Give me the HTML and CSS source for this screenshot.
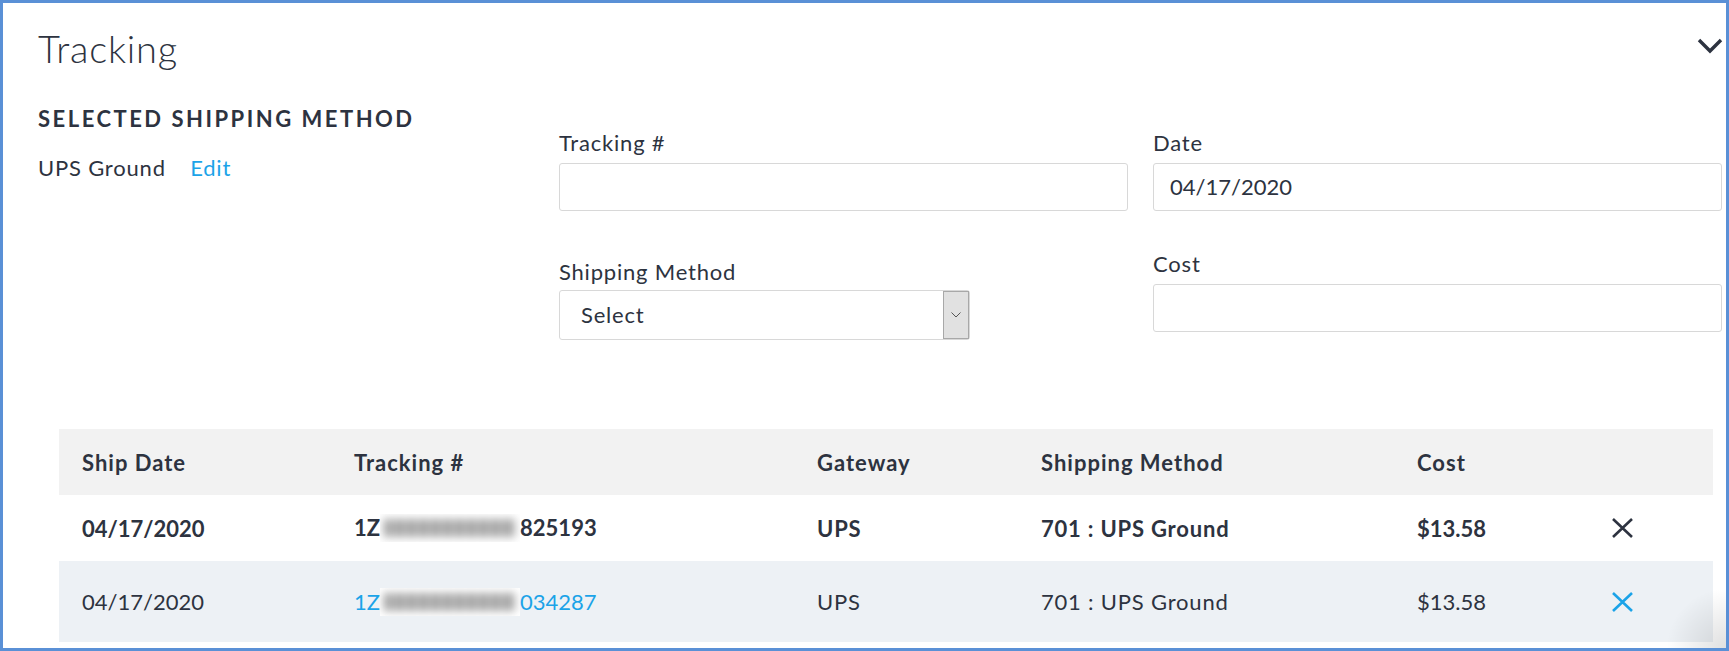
FILE: index.html
```html
<!DOCTYPE html>
<html>
<head>
<meta charset="utf-8">
<link rel="stylesheet" href="styles.css">
</head>
<body>
<div class="panel">
  <div class="panel-head">
    <h1 class="title">Tracking</h1>
    <svg class="chevron" width="26" height="16" viewBox="0 0 26 16"><path d="M2 2 L13 13 L24 2" fill="none" stroke="#2d3340" stroke-width="3.4"/></svg>
  </div>
  <div class="top">
    <div class="selected">
      <h2 class="sel-title">SELECTED SHIPPING METHOD</h2>
      <div class="sel-value">UPS Ground <a class="link edit">Edit</a></div>
    </div>
    <div class="form">
      <div class="field">
        <label class="label">Tracking #</label>
        <div class="input"></div>
      </div>
      <div class="field">
        <label class="label">Date</label>
        <div class="input num">04/17/2020</div>
      </div>
      <div class="field field-select">
        <label class="label">Shipping Method</label>
        <div class="select">
          <span class="select-text">Select</span>
          <span class="select-btn"><svg width="10" height="6" viewBox="0 0 10 6"><path d="M0.5 0.5 L5 5 L9.5 0.5" fill="none" stroke="#555" stroke-width="1"/></svg></span>
        </div>
      </div>
      <div class="field field-cost">
        <label class="label">Cost</label>
        <div class="input"></div>
      </div>
    </div>
  </div>
  <table class="grid">
    <colgroup>
      <col class="c1"><col class="c2"><col class="c3"><col class="c4"><col class="c5"><col class="c6">
    </colgroup>
    <thead>
      <tr class="head-row">
        <th>Ship Date</th><th>Tracking #</th><th>Gateway</th><th>Shipping Method</th><th>Cost</th><th></th>
      </tr>
    </thead>
    <tbody>
      <tr class="row row-bold">
        <td class="num">04/17/2020</td>
        <td class="num">1Z<span class="blur"><span class="blur-in"></span></span>825193</td>
        <td>UPS</td>
        <td>701 : UPS Ground</td>
        <td class="num">$13.58</td>
        <td><svg class="x" width="21" height="20" viewBox="0 0 21 20"><path d="M1 1 L20 19 M20 1 L1 19" stroke="#2d3340" stroke-width="2.6" fill="none"/></svg></td>
      </tr>
      <tr class="row row-alt">
        <td class="num">04/17/2020</td>
        <td class="num"><a class="link">1Z<span class="blur"><span class="blur-in"></span></span>034287</a></td>
        <td>UPS</td>
        <td>701 : UPS Ground</td>
        <td class="num">$13.58</td>
        <td><svg class="x" width="21" height="20" viewBox="0 0 21 20"><path d="M1 1 L20 19 M20 1 L1 19" stroke="#1ba3e8" stroke-width="2.6" fill="none"/></svg></td>
      </tr>
    </tbody>
  </table>
  <div class="corner"></div>
</div>
</body>
</html>
```

FILE: styles.css
```css
* { box-sizing: border-box; }
html, body { margin: 0; padding: 0; background: #fff; }
body {
  font-family: Lato, "Liberation Sans", sans-serif;
  color: #2d3340;
  font-size: 22px;
  letter-spacing: 0.8px;
}
.num { letter-spacing: 0; }
.panel {
  position: relative;
  width: 1729px;
  height: 651px;
  border: 3px solid #5a90d6;
  padding: 22px 4px 0 35px;
  overflow: hidden;
}
.panel-head {
  display: flex;
  justify-content: space-between;
  align-items: flex-start;
  height: 46px;
}
.title {
  margin: 0;
  font-size: 38px;
  line-height: 46px;
  font-weight: 300;
  letter-spacing: 0.8px;
}
.chevron { margin-top: 13px; margin-right: -1px; }
.top {
  display: flex;
  align-items: flex-start;
  margin-top: 35px;
}
.selected { width: 521px; flex: none; }
.sel-title {
  margin: 0;
  font-size: 22px;
  line-height: 25px;
  font-weight: 700;
  letter-spacing: 2.5px;
}
.sel-value {
  margin-top: 24px;
  font-size: 22px;
  line-height: 26px;
}
.link { color: #1ba3e8; text-decoration: none; }
.edit { margin-left: 18px; }
.form {
  flex: 1;
  display: grid;
  grid-template-columns: 1fr 1fr;
  column-gap: 25px;
  padding-top: 24px;
}
.field { display: flex; flex-direction: column; }
.label {
  font-size: 22px;
  line-height: 26px;
  margin-bottom: 7px;
}
.input {
  height: 48px;
  border: 1px solid #d8d8d8;
  border-radius: 3px;
  padding: 0 16px;
  font-size: 22px;
  line-height: 46px;
}
.field-select { margin-top: 48px; }
.field-select .label { margin-bottom: 5px; }
.field-cost { margin-top: 40px; }
.select {
  width: 411px;
  height: 50px;
  border: 1px solid #d8d8d8;
  border-radius: 3px;
  display: flex;
  align-items: stretch;
}
.select-text {
  flex: 1;
  padding-left: 21px;
  line-height: 48px;
}
.select-btn {
  width: 26px;
  background: #e1e1e1;
  border: 1px solid #a8a8a8;
  display: flex;
  align-items: center;
  justify-content: center;
}
.grid {
  border-collapse: collapse;
  table-layout: fixed;
  width: 1654px;
  margin: 89px 0 0 21px;
}
.c1 { width: 272px; } .c2 { width: 463px; } .c3 { width: 224px; }
.c4 { width: 376px; } .c5 { width: 195px; } .c6 { width: 124px; }
.grid th, .grid td {
  padding: 0 0 0 23px;
  text-align: left;
  white-space: nowrap;
  font-size: 22px;
}
.head-row { background: #f2f2f2; height: 66px; }
.head-row th { font-weight: 700; letter-spacing: 1px; }
.row { height: 66px; }
.row-bold td { font-weight: 700; }
.row-bold td.num { letter-spacing: 0; }
.row-alt { background: #edf1f5; height: 81px; }
.x { display: block; }
.blur {
  display: inline-block;
  width: 140px;
  height: 28px;
  vertical-align: -6px;
  background: #fff;
  overflow: hidden;
  position: relative;
}
.blur-in {
  position: absolute;
  left: 4px; right: 4px; top: 5px; bottom: 5px;
  background: repeating-linear-gradient(90deg, #9c9c9c 0 7px, #c6c6c6 7px 12px);
  filter: blur(4px);
}
.corner {
  position: absolute;
  right: 0; bottom: 0;
  width: 60px; height: 60px;
  background: radial-gradient(circle at 100% 100%, rgba(0,0,0,0.12), rgba(0,0,0,0) 70%);
  pointer-events: none;
}
```
